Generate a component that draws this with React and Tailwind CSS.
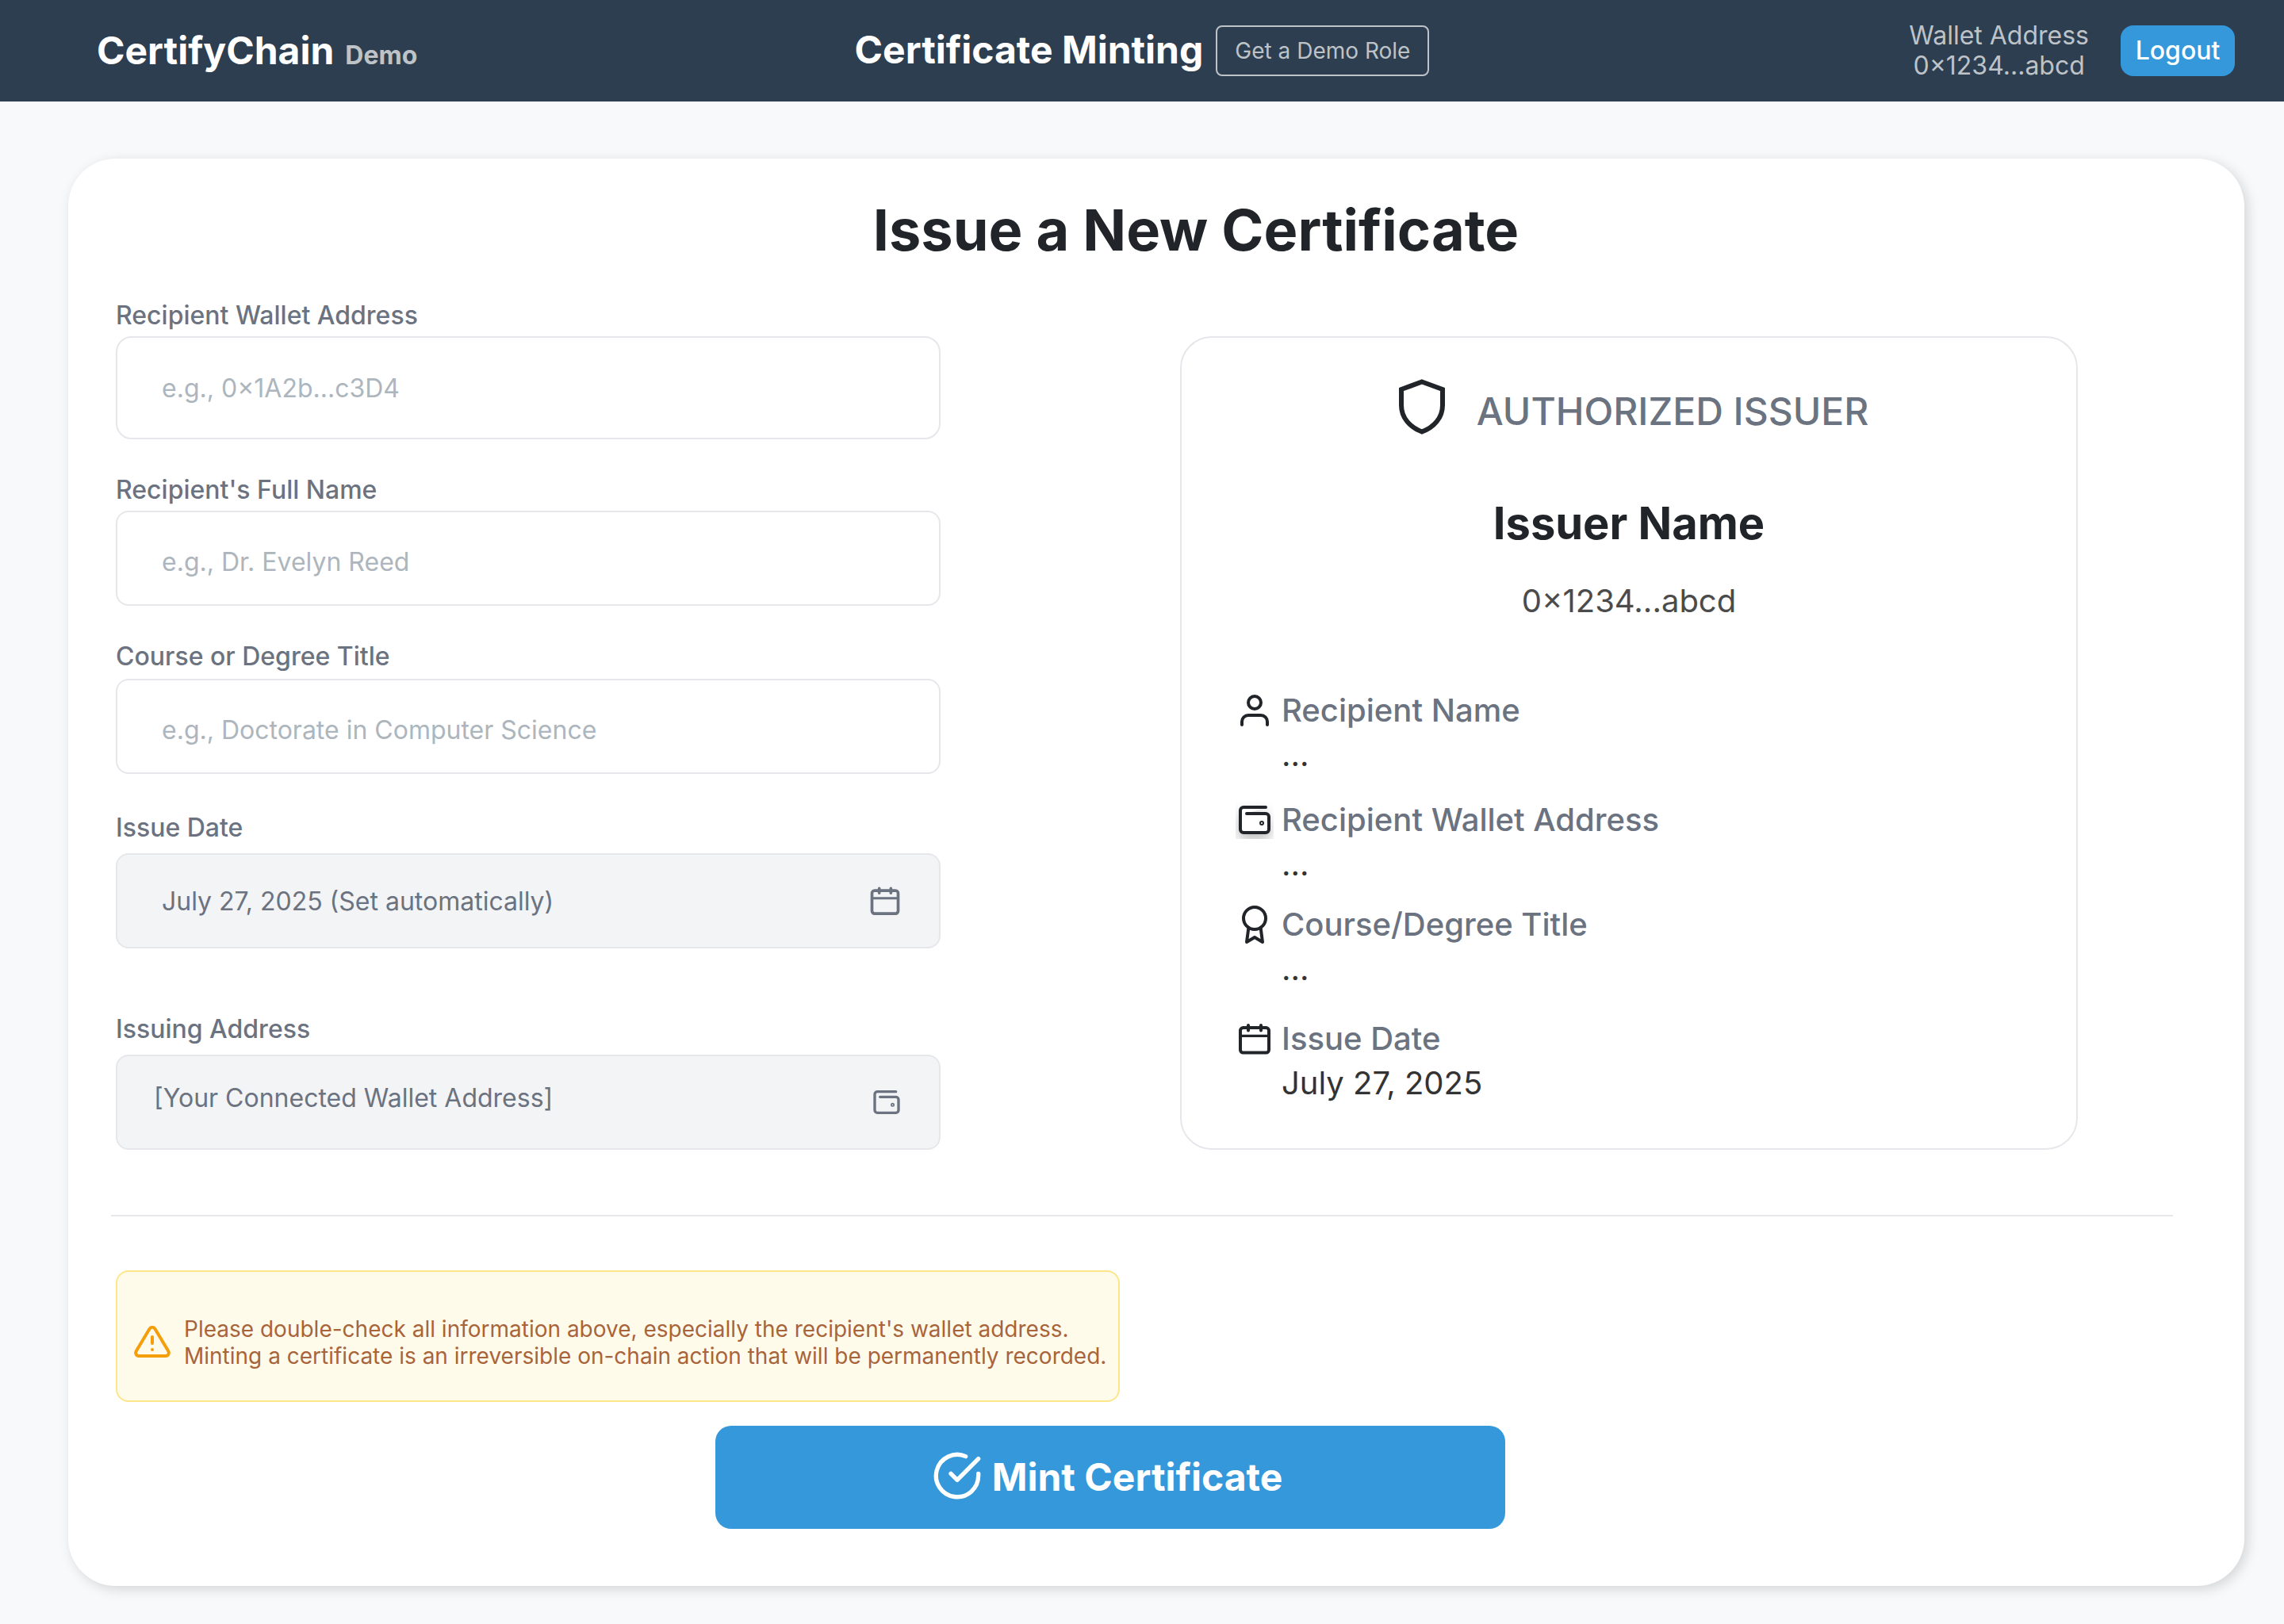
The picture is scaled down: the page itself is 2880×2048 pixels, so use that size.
import React from "react";

function Svg({ className, children }) {
  return (
    <svg viewBox="0 0 24 24" fill="none" stroke="currentColor" strokeWidth="2" strokeLinecap="round" strokeLinejoin="round" className={className} aria-hidden="true">
      {children}
    </svg>
  );
}

const ShieldIcon = ({ className }) => (
  <svg viewBox="0 0 58 70" fill="none" stroke="currentColor" strokeWidth="6" className={className} aria-hidden="true">
    <path d="M29 3.500 L55 13 V33 C55 49 44 61 29 66.500 C14 61 3 49 3 33 V13 Z" />
  </svg>
);

const UserIcon = ({ className }) => (
  <Svg className={className}>
    <path d="M20 21v-2a4 4 0 0 0-4-4H8a4 4 0 0 0-4 4v2" />
    <circle cx="12" cy="7" r="4" />
  </Svg>
);

const WalletIcon = ({ className, fill = "none" }) => (
  <Svg className={className}>
    <path fill={fill} d="M19 4H5a2 2 0 0 0-2 2v12a2 2 0 0 0 2 2h14a2 2 0 0 0 2-2v-8a2 2 0 0 0-2-2H7" />
    <circle cx="16.500" cy="14" r="0.500" />
  </Svg>
);

const AwardIcon = ({ className }) => (
  <Svg className={className}>
    <circle cx="12" cy="8" r="7" />
    <path d="M8.210 13.890 7 23l5-3 5 3-1.210-9.120" />
  </Svg>
);

const CalendarIcon = ({ className }) => (
  <Svg className={className}>
    <rect x="3" y="5" width="18" height="15.800" rx="1.800" />
    <path d="M8 3.500v3.200M16 3.500v3.200" />
    <path d="M3 10.200h18" strokeWidth="1.600" />
  </Svg>
);

const WarningIcon = ({ className }) => (
  <Svg className={className}>
    <path d="M10.290 3.860 1.820 18a2 2 0 0 0 1.710 3h16.940a2 2 0 0 0 1.710-3L13.710 3.860a2 2 0 0 0-3.420 0z" />
    <path d="M12 9v4M12 17h.01" />
  </Svg>
);

const CheckIcon = ({ className }) => (
  <Svg className={className}>
    <path d="M22 11v1a10 10 0 1 1-6-9.140" />
    <path d="M22 4 12 14.010l-3-3" />
  </Svg>
);

function Field({ id, label, className, children }) {
  return (
    <div className={`flex flex-col ${className}`}>
      <label htmlFor={id} className="text-[32px] leading-10 font-medium text-[#6b7280]">
        {label}
      </label>
      {children}
    </div>
  );
}

const inputBase = "w-full border-2 border-[#e5e7eb] text-[32px] outline-none";

function Detail({ icon, label, value, className }) {
  return (
    <div className={`flex gap-2.5 ${className}`}>
      <div className="flex h-14 w-12 items-center">{icon}</div>
      <dl className="text-[40px] leading-14">
        <dt className="font-medium text-[#6b7280]">{label}</dt>
        <dd className="text-[#333333]">{value}</dd>
      </dl>
    </div>
  );
}

export default function App() {
  return (
    <div className="min-h-screen bg-[#f8f9fb] pb-12 font-['Inter',sans-serif]">
      <header className="grid h-32 grid-cols-[1fr_auto_1fr] items-center bg-[#2c3e50]">
        <div className="flex items-baseline gap-3.5 pl-[122px] leading-none font-bold">
          <span className="text-5xl leading-none text-white">CertifyChain</span>
          <span className="text-[32px] leading-none text-[#bdc3c7]">Demo</span>
        </div>
        <div className="flex items-center gap-4">
          <h1 className="pb-0.5 text-5xl leading-none font-bold text-white">Certificate Minting</h1>
          <button type="button" className="h-16 rounded-lg border-2 border-[#bdc3c7] px-[22px] text-[28px] text-[#bdc3c7]">
            Get a Demo Role
          </button>
        </div>
        <div className="flex items-center justify-end gap-10 pr-[62px]">
          <p className="text-center text-[32px] leading-[38px] text-[#bdc3c7]">
            Wallet Address
            <br />
            0×1234...abcd
          </p>
          <button type="button" className="h-16 w-36 rounded-2xl bg-[#3498db] text-center text-[32px] font-medium text-white">
            Logout
          </button>
        </div>
      </header>

      <main className="mt-[72px] mr-[50px] ml-[86px] rounded-[60px] bg-white pt-[46px] pr-[90px] pb-[72px] pl-[54px] shadow-[4px_4px_16px_rgba(0,0,0,0.15)]">
        <h2 className="pl-[136px] text-center text-7xl leading-[88px] font-bold text-[#212529]">Issue a New Certificate</h2>

        <form>
          <div className="mt-11 flex items-stretch justify-between pr-[120px] pl-1.5">
            <div className="flex w-[1040px] flex-col">
              <Field id="wallet" label="Recipient Wallet Address" className="gap-1.5">
                <input id="wallet" type="text" placeholder="e.g., 0×1A2b...c3D4" className={`${inputBase} h-[130px] rounded-[20px] pl-14 placeholder:text-[#adb5bd]`} />
              </Field>
              <Field id="fullname" label="Recipient's Full Name" className="mt-11 gap-1.5">
                <input id="fullname" type="text" placeholder="e.g., Dr. Evelyn Reed" className={`${inputBase} h-[120px] rounded-2xl pt-2 pl-14 placeholder:text-[#adb5bd]`} />
              </Field>
              <Field id="course" label="Course or Degree Title" className="mt-11 gap-2">
                <input id="course" type="text" placeholder="e.g., Doctorate in Computer Science" className={`${inputBase} h-[120px] rounded-2xl pt-2 pl-14 placeholder:text-[#adb5bd]`} />
              </Field>
              <Field id="date" label="Issue Date" className="mt-12 gap-3">
                <div className="relative">
                  <input id="date" type="text" readOnly value="July 27, 2025 (Set automatically)" className={`${inputBase} h-[120px] rounded-2xl bg-[#f3f4f6] pl-14 text-[#6b7280]`} />
                  <CalendarIcon className="absolute top-[38px] right-12 size-11 text-[#6b7280]" />
                </div>
              </Field>
              <Field id="issuing" label="Issuing Address" className="mt-[82px] gap-3">
                <div className="relative">
                  <input id="issuing" type="text" readOnly value="[Your Connected Wallet Address]" className={`${inputBase} h-[120px] rounded-2xl bg-[#f3f4f6] pb-3 pl-[46px] text-[#6b7280]`} />
                  <WalletIcon className="absolute top-10 right-12 size-10 text-[#6b7280]" />
                </div>
              </Field>
            </div>

            <section className="mt-[46px] flex w-[1132px] flex-col rounded-[40px] border-2 border-[#e5e7eb] px-[68px]">
              <div className="mt-[52px] flex items-start justify-center gap-10 pl-3">
                <ShieldIcon className="h-[70px] w-[58px] text-[#212529]" />
                <p className="mt-3 text-5xl leading-[58px] font-medium text-[#6b7280]">AUTHORIZED ISSUER</p>
              </div>
              <p className="mt-[78px] text-center text-[56px] leading-[68px] font-bold text-[#212529]">Issuer Name</p>
              <p className="mt-10 text-center text-[40px] leading-12 text-[#4b4b4b]">0×1234...abcd</p>
              <div className="mt-[86px]">
                <Detail icon={<UserIcon className="size-12 text-[#212529]" />} label="Recipient Name" value="..." />
                <Detail
                  className="mt-[26px]"
                  icon={
                    <span className="size-12 overflow-hidden">
                      <WalletIcon fill="white" className="size-12 text-[#212529] drop-shadow-[0_8px_8px_rgba(0,0,0,0.25)]" />
                    </span>
                  }
                  label="Recipient Wallet Address"
                  value="..."
                />
                <Detail className="mt-5" icon={<AwardIcon className="size-12 overflow-visible text-[#212529]" />} label="Course/Degree Title" value="..." />
                <Detail className="mt-8" icon={<CalendarIcon className="size-12 text-[#212529]" />} label="Issue Date" value="July 27, 2025" />
              </div>
            </section>
          </div>

          <hr className="mt-[82px] border-t-2 border-[#e5e7eb]" />

          <div role="alert" className="mt-[68px] ml-1.5 flex h-[166px] w-[1266px] items-center rounded-2xl border-2 border-[#fde68a] bg-[#fffbeb] pl-5">
            <WarningIcon className="mt-3.5 size-12 text-[#f59e0b]" />
            <p className="mt-4 ml-4 text-[28px] leading-[34px] text-[#a8643a]">
              Please double-check all information above, especially the recipient's wallet address.
              <br />
              Minting a certificate is an irreversible on-chain action that will be permanently recorded.
            </p>
          </div>

          <div className="mt-[30px] flex justify-center pr-20">
            <button type="button" className="flex h-[130px] w-[996px] items-center justify-center gap-3 rounded-[20px] bg-[#3498db] pr-2 text-5xl font-bold text-white">
              <CheckIcon className="mb-1 size-16" />
              Mint Certificate
            </button>
          </div>
        </form>
      </main>
    </div>
  );
}
